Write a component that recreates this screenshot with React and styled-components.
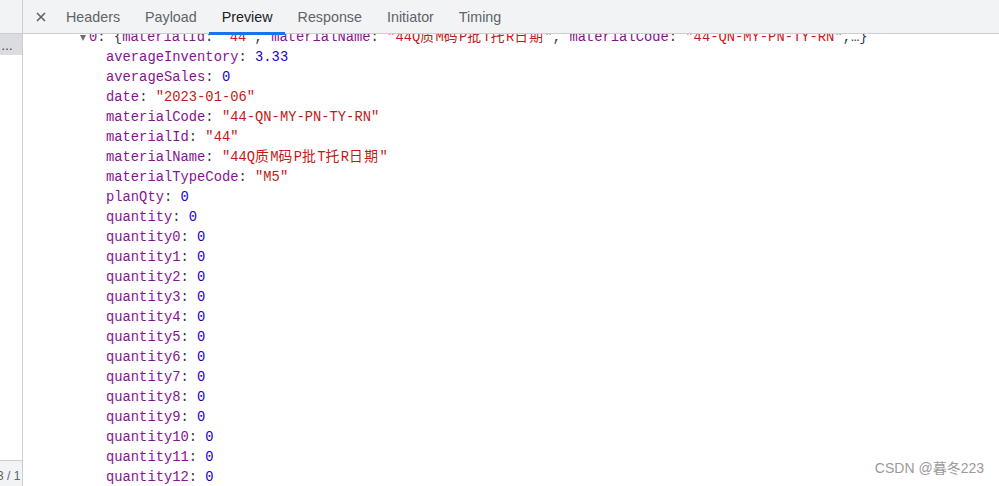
import React from "react";
import styled, { createGlobalStyle } from "styled-components";

const GlobalStyle = createGlobalStyle`
    html, body {
        margin: 0;
        padding: 0;
        background: #fff;
        overflow: hidden;
    }
`;

const Page = styled.div`
    display: flex;
    width: 999px;
    height: 486px;
    font-family: "Liberation Sans", Arial, sans-serif;
`;

/* panel izquierdo (lista de peticiones, casi oculto) */
const Sidebar = styled.div`
    width: 22px;
    flex-shrink: 0;
    display: flex;
    flex-direction: column;
    border-right: 1px solid #cbcdd1;
    overflow: hidden;
`;

const SideHeader = styled.div`
    height: 33px;
    background: #f1f3f4;
    border-bottom: 1px solid #cbcdd1;
`;

const SideRow = styled.div`
    height: 21px;
    background: ${(p) => (p.$selected ? "#dadce0" : "#fff")};
    color: #333;
    font-size: 12px;
    line-height: 24px;
    white-space: nowrap;
    padding-left: 1px;
`;

const SideSpacer = styled.div`
    flex: 1;
`;

const SideFooter = styled.div`
    height: 25px;
    border-top: 1px solid #cbcdd1;
    background: #f1f3f4;
    color: #5f6368;
    font-size: 12px;
    line-height: 30px;
    white-space: nowrap;
    text-indent: -3px;
`;

const Main = styled.div`
    flex: 1;
    display: flex;
    flex-direction: column;
    position: relative;
    min-width: 0;
`;

const TabBar = styled.div`
    height: 33px;
    display: flex;
    align-items: stretch;
    background: #f1f3f4;
    border-bottom: 1px solid #cbcdd1;
    position: relative;
    z-index: 1;
`;

const CloseButton = styled.div`
    width: 30.5px;
    display: flex;
    align-items: center;
    padding-left: 13px;
    box-sizing: border-box;
    color: #5f6368;
`;

const Tab = styled.div`
    position: relative;
    display: flex;
    align-items: center;
    padding: 0 12.5px;
    font-size: 14.3px;
    color: ${(p) => (p.$active ? "#202124" : "#5f6368")};

    &::after {
        content: "";
        display: ${(p) => (p.$active ? "block" : "none")};
        position: absolute;
        left: 0;
        right: 0;
        bottom: -2px;
        height: 3px;
        background: #1a73e8;
    }
`;

const Body = styled.div`
    flex: 1;
    overflow: hidden;
    background: #fff;
`;

const Tree = styled.div`
    margin-top: -6px;
    font-family: "Liberation Mono", "Noto Sans CJK SC", monospace;
    font-size: 13.8px;
    color: #303942;
`;

const Row = styled.div`
    height: 20px;
    line-height: 20px;
    white-space: nowrap;
    padding-left: ${(p) => (p.$depth === 0 ? 57 : 83)}px;
    display: flex;
    align-items: center;
`;

const Arrow = styled.span`
    width: 0;
    height: 0;
    border-left: 3.5px solid transparent;
    border-right: 3.5px solid transparent;
    border-top: 6px solid #6e6e6e;
    margin-right: 3px;
    margin-top: -1px;
`;

const Key = styled.span`
    color: #881391;
`;

const Str = styled.span`
    color: #c41a16;
`;

const Num = styled.span`
    color: #1c00cf;
`;

/* los caracteres chinos salen algo más anchos en la captura */
const Wide = styled.span`
    letter-spacing: 1.4px;
`;

const Watermark = styled.div`
    position: absolute;
    right: 15px;
    bottom: 9px;
    font-family: "Liberation Sans", "Noto Sans CJK SC", sans-serif;
    font-size: 14px;
    color: #9a9a9a;
`;

const tabs = ["Headers", "Payload", "Preview", "Response", "Initiator", "Timing"];

const fields = [
    ["averageInventory", 3.33],
    ["averageSales", 0],
    ["date", "2023-01-06"],
    ["materialCode", "44-QN-MY-PN-TY-RN"],
    ["materialId", "44"],
    ["materialName", "44Q质M码P批T托R日期"],
    ["materialTypeCode", "M5"],
    ["planQty", 0],
    ["quantity", 0],
    ...Array.from({ length: 13 }, (_, i) => ["quantity" + i, 0]),
];

const Text = ({ s }) =>
    s.split(/([\u4e00-\u9fff]+)/).map((part, i) =>
        /[\u4e00-\u9fff]/.test(part) ? <Wide key={i}>{part}</Wide> : part
    );

const Value = ({ v }) =>
    typeof v === "string" ? (
        <Str>
            "<Text s={v} />"
        </Str>
    ) : (
        <Num>{v}</Num>
    );

const App = () => {
    return (
        <>
            <GlobalStyle />
            <Page>
                <Sidebar>
                    <SideHeader />
                    <SideRow $selected>…</SideRow>
                    <SideSpacer />
                    <SideFooter>3 / 1</SideFooter>
                </Sidebar>
                <Main>
                    <TabBar>
                        <CloseButton>
                            <svg width="10" height="10" viewBox="0 0 10 10">
                                <path
                                    d="M1 1 L9 9 M9 1 L1 9"
                                    stroke="#5f6368"
                                    strokeWidth="1.6"
                                />
                            </svg>
                        </CloseButton>
                        {tabs.map((t) => (
                            <Tab key={t} $active={t === "Preview"}>
                                {t}
                            </Tab>
                        ))}
                    </TabBar>
                    <Body>
                        <Tree>
                            <Row $depth={0}>
                                <Arrow />
                                <span>
                                    <Key>0</Key>: {"{"}
                                    <Key>materialId</Key>: <Value v="44" />,{" "}
                                    <Key>materialName</Key>:{" "}
                                    <Value v="44Q质M码P批T托R日期" />,{" "}
                                    <Key>materialCode</Key>:{" "}
                                    <Value v="44-QN-MY-PN-TY-RN" />,…{"}"}
                                </span>
                            </Row>
                            {fields.map(([k, v]) => (
                                <Row key={k} $depth={1}>
                                    <span>
                                        <Key>{k}</Key>: <Value v={v} />
                                    </span>
                                </Row>
                            ))}
                        </Tree>
                    </Body>
                    <Watermark>CSDN @暮冬223</Watermark>
                </Main>
            </Page>
        </>
    );
};

export default App;
